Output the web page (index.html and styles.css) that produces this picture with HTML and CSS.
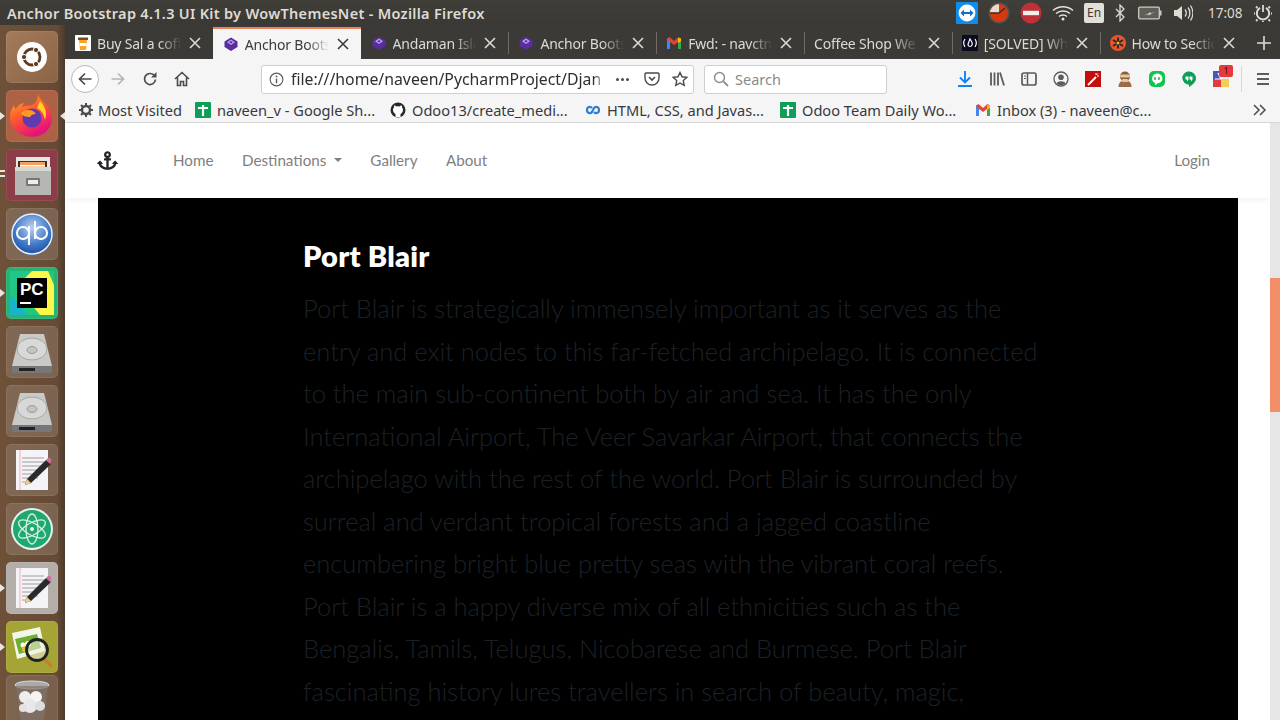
FILE: index.html
```html
<!DOCTYPE html>
<html lang="en">
<head>
<meta charset="utf-8">
<title>Anchor Bootstrap 4.1.3 UI Kit by WowThemesNet - Mozilla Firefox</title>
<link rel="stylesheet" href="styles.css">
</head>
<body>
<svg class="defs" viewBox="0 0 1 1"><defs>
  <g id="close"><path d="M1 1l10 10M11 1L1 11" fill="none" stroke="currentColor" stroke-width="1.600"/></g>
  <g id="hdd"><path d="M10 4h24l8 32H2z" fill="#c9c9c7"/><path d="M2 36h40v5a2 2 0 0 1-2 2H4a2 2 0 0 1-2-2z" fill="#77777a"/><rect x="9" y="38" width="16" height="3" fill="#222"/><ellipse cx="22" cy="19" rx="15" ry="11" fill="#d8d8d6" stroke="#a6a6a4"/><ellipse cx="22" cy="20" rx="5" ry="3.500" fill="#c4c4c2" stroke="#999"/></g>
  <g id="gedit"><rect x="6" y="2" width="32" height="40" fill="#f4f4f8"/><path d="M10 2v40" stroke="#f0b0b0"/><path d="M12 10h22M12 14h22M12 18h20M12 22h18M12 26h14M12 30h16M12 34h10" stroke="#888" stroke-width=".8"/><path d="M15 37l2-6 19-19 5 4-20 19z" fill="#2a2a2a"/><path d="M36 12l2-2c2-1 4 2 3 4l-1 2z" fill="#d46a9c"/><path d="M15 37l2-6 4 4z" fill="#f0d080"/></g>
  <g id="gem"><path d="M8 1.500l6.500 4v5.500L8 15l-6.500-4V5.500z" fill="#5a2ca0"/><path d="M8 3.500l4 2.700-4 2.700-4-2.700z" fill="#b9a3e6"/><path d="M8 5l1.800 1.200L8 7.400 6.200 6.200z" fill="#5a2ca0"/></g>
  <g id="gmail"><path d="M1 3.500V14h3V7l4 3 4-3v7h3V3.500L12.500 2 8 6 3.500 2z" fill="#ea4335"/><path d="M1 4v10h3V6.500z" fill="#4285f4"/><path d="M15 4v10h-3V6.500z" fill="#34a853"/><path d="M12 3l3 .5V6l-3 2z" fill="#fbbc04"/></g>
  <g id="gsheet"><rect width="16" height="16" rx="1" fill="#0f9d58"/><path d="M8 3v11M3 6h10" stroke="#fff" stroke-width="2.200"/></g>
</defs></svg>

<header class="panel">
  <div class="wintitle">Anchor Bootstrap 4.1.3 UI Kit by WowThemesNet - Mozilla Firefox</div>
  <div class="tray">
    <svg class="t-tv" viewBox="0 0 22 22"><rect width="22" height="22" rx="1" fill="#0e8ee9"/><circle cx="11" cy="11" r="8.400" fill="#fff"/><path d="M4.500 11l3.500-3.500V10h6V7.500l3.500 3.500-3.500 3.500V12H8v2.500z" fill="#0e6fd0"/></svg>
    <svg class="t-dial" viewBox="0 0 22 22"><circle cx="11" cy="11" r="10.500" fill="#55534f"/><circle cx="11" cy="11" r="9" fill="#d8380f"/><path d="M11 11V2a9 9 0 0 0-9 9z" fill="#ead9cc"/><path d="M11 11H2M11 11l6-5" stroke="#3a2a20" stroke-width="1.300"/></svg>
    <svg class="t-stop" viewBox="0 0 22 22"><circle cx="11" cy="11" r="10.500" fill="#c03038"/><rect x="3" y="8.800" width="16" height="4.400" fill="#f3f0ec"/></svg>
    <svg class="t-wifi" viewBox="0 0 22 16"><path d="M1 5.500c5.500-5 14.500-5 20 0M4 8.500c3.800-3.400 10.200-3.400 14 0M7 11.500c2.200-1.900 5.800-1.900 8 0" fill="none" stroke="#e6e3dd" stroke-width="1.500"/><circle cx="11" cy="14" r="1.500" fill="#e6e3dd"/></svg>
    <span class="t-lang">En</span>
    <svg class="t-bt" viewBox="0 0 10 18"><path d="M1 5l8 8-4 4V1l4 4-8 8" fill="none" stroke="#dfdbd2" stroke-width="1.300"/></svg>
    <svg class="t-bat" viewBox="0 0 24 14"><rect x=".7" y="1.200" width="20.600" height="11.600" rx="1" fill="#5f5e59" stroke="#cfcbc3" stroke-width="1.300"/><rect x="21.500" y="4.500" width="2" height="5" fill="#cfcbc3"/><path d="M6 9.500l7-3.500-1 1.800 5-2-7 4 1-1.800z" fill="#dfdbd2"/></svg>
    <svg class="t-vol" viewBox="0 0 20 18"><path d="M1 6h3l5-4v14l-5-4H1z" fill="#dfdbd2"/><path d="M12 5.500c1.500 2 1.500 5 0 7M15 3.500c2.500 3 2.500 8 0 11M17.500 1.500c3 4.500 3 10.500 0 15" fill="none" stroke="#dfdbd2" stroke-width="1.300"/></svg>
    <span class="t-clock">17:08</span>
    <svg class="t-pow" viewBox="0 0 18 18"><path d="M6 3.800a6.200 6.200 0 1 0 6 0" fill="none" stroke="#dfdbd2" stroke-width="2"/><path d="M9 1v7" stroke="#dfdbd2" stroke-width="1.800"/><path d="M3.500 2.500L2 4M14.500 2.500L16 4M1 9.500H0M18 9.500h-1M3.500 15.500L2 17M14.500 15.500L16 17M9 17v1" stroke="#dfdbd2" stroke-width="1.800"/></svg>
  </div>
</header>

<div class="desk">
  <nav class="launcher">
    <div class="tile tile-ubuntu"><svg viewBox="0 0 44 44"><circle cx="22" cy="22" r="15" fill="#fff"/><circle cx="22" cy="22" r="8" fill="none" stroke="#5b3a22" stroke-width="2.800"/><circle cx="14" cy="22" r="2.600" fill="#5b3a22" stroke="#fff"/><circle cx="26" cy="15" r="2.600" fill="#5b3a22" stroke="#fff"/><circle cx="26" cy="29" r="2.600" fill="#5b3a22" stroke="#fff"/></svg></div>
    <div class="tile tile-fox pip-both"><svg viewBox="0 0 44 44"><defs><linearGradient id="fx" x1="0" y1="0" x2=".5" y2="1"><stop offset="0" stop-color="#ffbc1f"/><stop offset=".5" stop-color="#ff5a2c"/><stop offset="1" stop-color="#e6127c"/></linearGradient></defs><path d="M28 0c1 5 7 8 11 14 5 9 3 18-3 24-6 5-16 6-23 3C5 38 0 31 0 23c0-5 2-9 4-12 0 2 1 3 2 4 1-3 5-6 9-6-2 1-3 3-3 4 4-2 8-1 10-2 4-2 6-6 6-11z" fill="url(#fx)"/><path d="M30 7c4 4 8 11 5 19-1-6-4-10-8-12z" fill="#ffd028"/><circle cx="22" cy="24" r="9.500" fill="#5f3ab0"/><path d="M11 19c5-4 12-4 15 1-3 0-5 1-6 3-4 0-8-1-9-4z" fill="#ff9a20"/></svg></div>
    <div class="tile tile-files pip-double"><svg viewBox="0 0 44 44"><rect x="6" y="4" width="34" height="12" fill="#e6e6e4"/><rect x="8" y="8" width="29" height="10" fill="#333"/><rect x="10" y="9" width="25" height="7" fill="#f3a05e"/><rect x="10" y="12" width="25" height="1.500" fill="#fff"/><path d="M5 14h36v28H5z" fill="#b6b6b2"/><rect x="5" y="14" width="36" height="4" fill="#d8d8d4"/><rect x="16" y="25" width="14" height="8" rx="1" fill="#777"/><rect x="18" y="27" width="10" height="4" fill="#eee"/></svg></div>
    <div class="tile"><svg viewBox="0 0 44 44"><defs><radialGradient id="qb" cx=".5" cy=".35" r=".7"><stop offset="0" stop-color="#bcd2ee"/><stop offset=".6" stop-color="#3d78c8"/><stop offset="1" stop-color="#1a3f8c"/></radialGradient></defs><circle cx="22" cy="22" r="21" fill="url(#qb)"/><circle cx="22" cy="22" r="20" fill="none" stroke="#e8f0fb" stroke-width="1.500"/><circle cx="13" cy="21" r="6" fill="none" stroke="#fff" stroke-width="2"/><path d="M19 14v19" stroke="#fff" stroke-width="2"/><circle cx="31" cy="21" r="6" fill="none" stroke="#fff" stroke-width="2"/><path d="M25 9v18" stroke="#fff" stroke-width="2"/></svg></div>
    <div class="tile tile-pc pip-left"><svg viewBox="0 0 44 44"><rect width="44" height="44" fill="#22c77f"/><path d="M14 0h24l6 14v30H30L10 20z" fill="#fcf84a"/><path d="M0 0h22L0 22z" fill="#21c789"/><path d="M0 44V24l18 20z" fill="#19b4c8"/><rect x="7" y="7" width="30" height="30" fill="#000"/><text x="10" y="24" class="pc-text">PC</text><rect x="10" y="31" width="11" height="2" fill="#fff"/></svg></div>
    <div class="tile"><svg viewBox="0 0 44 44"><use href="#hdd"/></svg></div>
    <div class="tile"><svg viewBox="0 0 44 44"><use href="#hdd"/></svg></div>
    <div class="tile"><svg viewBox="0 0 44 44"><use href="#gedit"/></svg></div>
    <div class="tile"><svg viewBox="0 0 44 44"><circle cx="22" cy="22" r="21" fill="#e6f4ec"/><circle cx="22" cy="22" r="19" fill="#1fa971"/><g fill="none" stroke="#d8f2e4" stroke-width="1.300"><ellipse cx="22" cy="22" rx="15" ry="6" transform="rotate(30 22 22)"/><ellipse cx="22" cy="22" rx="15" ry="6" transform="rotate(90 22 22)"/><ellipse cx="22" cy="22" rx="15" ry="6" transform="rotate(150 22 22)"/></g><circle cx="22" cy="22" r="2" fill="#e6f4ec"/></svg></div>
    <div class="tile tile-light pip-left"><svg viewBox="0 0 44 44"><use href="#gedit"/></svg></div>
    <div class="tile tile-olive pip-left"><svg viewBox="0 0 44 44"><path d="M2 8l28-6 5 24-28 8z" fill="#f2f6e8"/><path d="M5 14l22-5 4 14-22 6z" fill="#6fae35"/><circle cx="13" cy="20" r="2.500" fill="#fff"/><circle cx="18" cy="19" r="3" fill="#fff"/><circle cx="15" cy="24" r="3" fill="#e8c030"/><path d="M33 33l9 9" stroke="#c8802e" stroke-width="3.500"/><circle cx="27" cy="25" r="10.500" fill="#f0f0e4" fill-opacity=".55" stroke="#20241c" stroke-width="2.800"/></svg></div>
    <div class="tile tile-trash"><svg viewBox="0 0 44 44"><ellipse cx="22" cy="6" rx="17" ry="4" fill="#aaa" stroke="#ddd"/><path d="M6 7l4 33c4 3 20 3 24 0l4-33z" fill="#80746a" fill-opacity=".7"/><circle cx="15" cy="18" r="6" fill="#eee"/><circle cx="26" cy="18" r="6" fill="#f4f4f4"/><circle cx="20" cy="27" r="7" fill="#e8e8e8"/><circle cx="30" cy="27" r="5" fill="#ddd"/><circle cx="13" cy="29" r="4" fill="#e2e2e2"/></svg></div>
  </nav>

  <div class="browser">
    <div class="tabstrip">
      <div class="tab"><svg class="fav" viewBox="0 0 16 16"><rect width="16" height="16" rx="1" fill="#fff"/><path d="M4 5h8l-1 10H5z" fill="#f5a623"/><rect x="3" y="2.500" width="10" height="2.500" fill="#7a4a20"/><rect x="4.500" y="8" width="7" height="3" fill="#fff"/></svg><span class="tab-name">Buy Sal a coff</span><svg class="tab-x" viewBox="0 0 12 12"><use href="#close"/></svg></div>
      <div class="tab tab-active"><svg class="fav" viewBox="0 0 16 16"><use href="#gem"/></svg><span class="tab-name">Anchor Boots</span><svg class="tab-x" viewBox="0 0 12 12"><use href="#close"/></svg></div>
      <div class="tab"><svg class="fav" viewBox="0 0 16 16"><use href="#gem"/></svg><span class="tab-name">Andaman Isla</span><svg class="tab-x" viewBox="0 0 12 12"><use href="#close"/></svg></div>
      <div class="tab tab-sep"><svg class="fav" viewBox="0 0 16 16"><use href="#gem"/></svg><span class="tab-name">Anchor Boots</span><svg class="tab-x" viewBox="0 0 12 12"><use href="#close"/></svg></div>
      <div class="tab tab-sep"><svg class="fav" viewBox="0 0 16 16"><use href="#gmail"/></svg><span class="tab-name">Fwd: - navctn</span><svg class="tab-x" viewBox="0 0 12 12"><use href="#close"/></svg></div>
      <div class="tab tab-sep"><span class="tab-name">Coffee Shop We</span><svg class="tab-x" viewBox="0 0 12 12"><use href="#close"/></svg></div>
      <div class="tab tab-sep"><svg class="fav" viewBox="0 0 16 16"><rect width="16" height="16" fill="#0a0a23"/><path d="M3 4c-2 3-2 5 0 8M13 4c2 3 2 5 0 8M8 4c1 2 3 3 2 6-1 2-3 2-4 0 0-2 1-3 2-6z" fill="none" stroke="#fff" stroke-width="1.200"/></svg><span class="tab-name">[SOLVED] Wh</span><svg class="tab-x" viewBox="0 0 12 12"><use href="#close"/></svg></div>
      <div class="tab tab-sep"><svg class="fav" viewBox="0 0 16 16"><circle cx="8" cy="8" r="8" fill="#e8552a"/><path d="M8 2.500v11M3 5l10 6M13 5L3 11" stroke="#2c2c2c" stroke-width="2"/><circle cx="8" cy="8" r="1.500" fill="#f5b51c"/></svg><span class="tab-name">How to Sectio</span><svg class="tab-x" viewBox="0 0 12 12"><use href="#close"/></svg></div>
      <div class="tab-plus"><svg viewBox="0 0 14 14"><path d="M7 0v14M0 7h14" stroke="#dfdbd2" stroke-width="1.600"/></svg></div>
    </div>

    <div class="toolbar">
      <div class="backbtn"><svg viewBox="0 0 16 16"><path d="M14.500 8H2.500M8 2.500L2.500 8 8 13.500" fill="none" stroke="#4a4a4f" stroke-width="1.700"/></svg></div>
      <svg class="tb-ic tb-fwd" viewBox="0 0 16 16"><path d="M1.500 8h12M8 2.500L13.500 8 8 13.500" fill="none" stroke="#b4b4b4" stroke-width="1.700"/></svg>
      <svg class="tb-ic" viewBox="0 0 16 16"><path d="M13.500 8.500A5.500 5.500 0 1 1 12 4.200" fill="none" stroke="#4a4a4f" stroke-width="1.700"/><path d="M14.500 1v5.500H9z" fill="#4a4a4f"/></svg>
      <svg class="tb-ic" viewBox="0 0 16 16"><path d="M1 8l7-6.500L15 8M3.500 6.500V14.500h3v-4h3v4h3V6.500" fill="none" stroke="#4a4a4f" stroke-width="1.600"/></svg>
      <div class="urlbar">
        <svg class="url-info" viewBox="0 0 16 16"><circle cx="8" cy="8" r="6.800" fill="none" stroke="#5a5a5f" stroke-width="1.200"/><path d="M8 7v5" stroke="#5a5a5f" stroke-width="1.500"/><circle cx="8" cy="4.700" r="1" fill="#5a5a5f"/></svg>
        <span class="url-text">file:///home/naveen/PycharmProject/Djan</span>
        <span class="url-dots"><i></i><i></i><i></i></span>
        <svg class="url-ic" viewBox="0 0 16 16"><path d="M2 2h12a1.500 1.500 0 0 1 1 1v4a7 7 0 0 1-14 0V3a1.500 1.500 0 0 1 1-1z" fill="none" stroke="#4a4a4f" stroke-width="1.400"/><path d="M5 6l3 3 3-3" fill="none" stroke="#4a4a4f" stroke-width="1.600"/></svg>
        <svg class="url-ic" viewBox="0 0 16 16"><path d="M8 1.500l2 4.300 4.700.6-3.400 3.200.9 4.700L8 12l-4.200 2.300.9-4.700L1.300 6.400 6 5.800z" fill="none" stroke="#4a4a4f" stroke-width="1.400"/></svg>
      </div>
      <div class="searchbar">
        <svg viewBox="0 0 16 16"><circle cx="6.500" cy="6.500" r="5" fill="none" stroke="#8f8f8f" stroke-width="1.500"/><path d="M10.500 10.500l4.500 4.500" stroke="#8f8f8f" stroke-width="1.800"/></svg>
        <span>Search</span>
      </div>
      <div class="tb-right">
        <svg class="tr-ic" viewBox="0 0 16 16"><path d="M8 0v11M3 6.500L8 11.500 13 6.500" fill="none" stroke="#0a84ff" stroke-width="1.900"/><rect x="1" y="14" width="14" height="2" fill="#0a84ff"/></svg>
        <svg class="tr-ic" viewBox="0 0 16 16"><path d="M2 1.500v13M5.500 1.500v13M9 1.500v13M11 1.500l4 13" stroke="#5a5a5f" stroke-width="1.800"/></svg>
        <svg class="tr-ic" viewBox="0 0 16 16"><rect x="1" y="2" width="14" height="12" rx="2" fill="none" stroke="#5a5a5f" stroke-width="1.700"/><path d="M6.500 2v12" stroke="#5a5a5f" stroke-width="1.500"/><path d="M3 5h2M3 7.500h2" stroke="#5a5a5f"/></svg>
        <svg class="tr-ic" viewBox="0 0 16 16"><circle cx="8" cy="8" r="7" fill="none" stroke="#5a5a5f" stroke-width="1.300"/><circle cx="8" cy="6.300" r="2.800" fill="#5a5a5f"/><path d="M3.500 12.500c1-3 8-3 9 0-2 2-7 2-9 0z" fill="#5a5a5f"/></svg>
        <svg class="tr-ic" viewBox="0 0 16 16"><rect width="16" height="16" fill="#c40d0d"/><path d="M3 14L11 6" stroke="#fff" stroke-width="2"/><path d="M11 2v2M14 5h-2M13 2.500l-1.500 1.500" stroke="#fff"/></svg>
        <svg class="tr-ic" viewBox="0 0 16 16"><circle cx="8" cy="5.500" r="5" fill="#8b5e3c"/><rect x="3" y="3.500" width="10" height="3" rx="1.500" fill="#e8c8a0"/><path d="M1.500 16c0-4 2-6.500 6.500-6.500s6.500 2.500 6.500 6.500z" fill="#9c6c48"/><rect x="4.500" y="8" width="7" height="3" rx="1.500" fill="#e8c8a0"/></svg>
        <svg class="tr-ic" viewBox="0 0 16 16"><rect width="16" height="16" rx="5" fill="#10c44c"/><path d="M8 2.500a5.500 5 0 0 1 0 10c-.5 1-1.500 1.500-2 1.500l.3-2A5.500 5 0 0 1 8 2.500z" fill="#fff"/><path d="M6 6.200v2.500M10 6.200v2.500" stroke="#10a040" stroke-width="1.500"/></svg>
        <svg class="tr-ic" viewBox="0 0 16 16"><path d="M8 .5a7 7 0 0 1 7 7c0 3.500-3.500 6.500-7 8.500v-2.500a6 6 0 0 1 0-13z" fill="#0f9d58"/><path d="M8 .5a6.500 6.500 0 0 0 0 13z" fill="#0f9d58"/><path d="M4.500 5.500h3v3l-1.500 2v-2h-1.500zM8.500 5.500h3v3l-1.500 2v-2H8.500z" fill="#fff"/></svg>
        <span class="tr-multi"><svg viewBox="0 0 16 16"><rect width="8" height="8" fill="#4a55b8"/><rect x="8" width="8" height="8" fill="#e8e8e8"/><rect y="8" width="8" height="8" fill="#e23a3a"/><rect x="8" y="8" width="8" height="8" fill="#f2ce58"/><path d="M8 8L5 2M8 8l4-6M8 8H2" stroke="#fff" stroke-width="1.200"/></svg><b class="badge">1</b></span>
        <span class="tb-div"></span>
        <svg class="tb-menu" viewBox="0 0 14 14"><path d="M1 2h12M1 7h12M1 12h12" stroke="#5a5a5f" stroke-width="1.800"/></svg>
      </div>
    </div>

    <div class="bookmarks">
      <div class="bm bm-first"><svg viewBox="0 0 16 16"><circle cx="8" cy="8" r="4" fill="none" stroke="#4a4a4f" stroke-width="2.400"/><path d="M8 1v3M8 12v3M1 8h3M12 8h3M3 3l2 2M11 11l2 2M13 3l-2 2M5 11l-2 2" stroke="#4a4a4f" stroke-width="2"/></svg><span>Most Visited</span></div>
      <div class="bm"><svg viewBox="0 0 16 16"><use href="#gsheet"/></svg><span>naveen_v - Google Sh...</span></div>
      <div class="bm"><svg viewBox="0 0 16 16"><circle cx="8" cy="8" r="7.500" fill="#24292e"/><path d="M5.500 15v-3c-1-.5-2.500-2-2.500-4 0-1 .3-2 1-2.500C4 4.500 4 4 4.300 3.500c1 0 1.700.5 2.200 1a6 6 0 0 1 3 0c.5-.5 1.200-1 2.200-1 .3.5.3 1 .3 2 .7.500 1 1.500 1 2.500 0 2-1.500 3.500-2.500 4v3z" fill="#fff"/></svg><span>Odoo13/create_medi...</span></div>
      <div class="bm"><svg viewBox="0 0 16 16"><path d="M7 6C5.500 4 2 4.500 2 8s3.500 4 5 2l2-4c1.500-2 5-1.500 5 2s-3.500 4-5 2" fill="none" stroke="#2f7fd6" stroke-width="2.200"/></svg><span>HTML, CSS, and Javas...</span></div>
      <div class="bm"><svg viewBox="0 0 16 16"><use href="#gsheet"/></svg><span>Odoo Team Daily Wo...</span></div>
      <div class="bm"><svg viewBox="0 0 16 16"><use href="#gmail"/></svg><span>Inbox (3) - naveen@c...</span></div>
      <svg class="bm-more" viewBox="0 0 14 12"><path d="M1 1l5 5-5 5M7 1l5 5-5 5" fill="none" stroke="#4a4a4f" stroke-width="1.500"/></svg>
    </div>

    <div class="viewport">
      <main class="page">
        <div class="sitenav">
          <svg class="brand" viewBox="0 0 576 512"><path fill="#212529" d="M12.971 352h32.394C67.172 454.735 181.944 512 288 512c106.229 0 220.853-57.38 242.635-160h32.394c10.691 0 16.045-12.926 8.485-20.485l-67.029-67.029c-4.686-4.686-12.284-4.686-16.971 0l-67.029 67.029c-7.56 7.56-2.206 20.485 8.485 20.485h35.146c-20.29 54.317-84.963 86.588-144.117 94.015V256h52c6.627 0 12-5.373 12-12v-40c0-6.627-5.373-12-12-12h-52v-5.47c37.281-13.178 63.995-48.725 64-90.518C384.005 43.772 341.605.738 289.37.01 235.723-.739 192 42.525 192 96c0 41.798 26.716 77.35 64 90.53V192h-52c-6.627 0-12 5.373-12 12v40c0 6.627 5.373 12 12 12h52v190.015c-58.936-7.399-123.82-39.679-144.117-94.015h35.146c10.691 0 16.045-12.926 8.485-20.485l-67.029-67.029c-4.686-4.686-12.284-4.686-16.971 0L4.485 331.515C-3.074 339.074 2.28 352 12.971 352zM288 64c17.645 0 32 14.355 32 32s-14.355 32-32 32-32-14.355-32-32 14.355-32 32-32z"/></svg>
          <a class="navlink">Home</a>
          <a class="navlink">Destinations<i class="caret"></i></a>
          <a class="navlink">Gallery</a>
          <a class="navlink">About</a>
          <a class="navlink login">Login</a>
        </div>
        <section class="hero">
          <div class="article">
            <h2>Port Blair</h2>
            <p>Port Blair is strategically immensely important as it serves as the<br>
            entry and exit nodes to this far-fetched archipelago. It is connected<br>
            to the main sub-continent both by air and sea. It has the only<br>
            International Airport, The Veer Savarkar Airport, that connects the<br>
            archipelago with the rest of the world. Port Blair is surrounded by<br>
            surreal and verdant tropical forests and a jagged coastline<br>
            encumbering bright blue pretty seas with the vibrant coral reefs.<br>
            Port Blair is a happy diverse mix of all ethnicities such as the<br>
            Bengalis, Tamils, Telugus, Nicobarese and Burmese. Port Blair<br>
            fascinating history lures travellers in search of beauty, magic,</p>
          </div>
        </section>
      </main>
      <div class="scrollbar"><div class="thumb"></div></div>
    </div>
  </div>
</div>
</body>
</html>
```
FILE: styles.css
```css
* { box-sizing: border-box; }
html, body { margin: 0; height: 720px; overflow: hidden; }
body { display: flex; flex-direction: column; font-family: "Noto Sans", "Open Sans", sans-serif; background: #fff; }
.defs { display: none; }

.panel { height: 25px; flex: none; display: flex; align-items: center; justify-content: space-between; background: linear-gradient(#3f3e39, #3a3935); color: #dfdbd2; }
.wintitle { margin-left: 7px; font-size: 14.500px; letter-spacing: .3px; font-weight: 600; white-space: nowrap; }
.tray { display: flex; align-items: center; width: 324px; flex: none; height: 25px; }
.tray svg, .tray span { flex: none; }
.t-tv { width: 22px; height: 22px; }
.t-dial { width: 22px; height: 22px; margin-left: 10px; }
.t-stop { width: 22px; height: 22px; margin-left: 10px; }
.t-wifi { width: 22px; height: 16px; margin-left: 10px; }
.t-lang { width: 20px; height: 20px; margin-left: 10px; background: #e2dfd8; color: #3c3b37; font-size: 12px; line-height: 20px; text-align: center; border-radius: 2px; }
.t-bt { width: 10px; height: 18px; margin-left: 11px; }
.t-bat { width: 24px; height: 14px; margin-left: 13px; }
.t-vol { width: 20px; height: 18px; margin-left: 11px; }
.t-clock { margin-left: 15px; font-size: 13.500px; width: 36px; }
.t-pow { width: 18px; height: 18px; margin-left: 10px; }

.desk { flex: 1; min-height: 0; display: flex; }

.launcher { width: 65px; flex: none; display: flex; flex-direction: column; gap: 7px; padding: 6px 0 0 6px; background: linear-gradient(90deg, #6e5138, #664a35 88%, #4e3a2b); overflow: hidden; }
.tile { width: 52px; height: 52px; flex: none; position: relative; display: flex; align-items: center; justify-content: center; border-radius: 5px; background: rgba(255,255,255,.14); box-shadow: inset 0 0 0 1px rgba(255,255,255,.08); }
.tile svg { width: 44px; height: 44px; }
.tile-ubuntu { background: linear-gradient(135deg, #a47b5c, #8a6446); }
.tile-fox { background: #ad6145; }
.tile-files { background: #8d3d47; }
.tile-pc { background: #27b374; }
.tile-light { background: #b3aeaa; }
.tile-olive { background: #a5a535; }
.tile-trash { background: rgba(255,255,255,.12); margin-top: -5px; }
.pc-text { fill: #fff; font-family: "Liberation Sans", sans-serif; font-size: 17px; font-weight: 700; }
.pip-left::before, .pip-both::before { content: ""; position: absolute; left: -6px; top: 22px; border: 4px solid transparent; border-left: 5px solid #e8e4de; }
.pip-both::after { content: ""; position: absolute; right: -7px; top: 22px; border: 4px solid transparent; border-right: 5px solid #e8e4de; }
.pip-double::before { content: ""; position: absolute; left: -6px; top: 21px; width: 5px; height: 2px; background: #e8e4de; box-shadow: 0 5px 0 #e8e4de; }

.browser { flex: 1; min-width: 0; display: flex; flex-direction: column; }

.tabstrip { height: 34px; flex: none; display: flex; align-items: flex-end; background: #3b3a36; padding-top: 2px; }
.tab { flex: 0 0 147.800px; min-width: 0; height: 32px; display: flex; align-items: center; gap: 6px; padding: 0 12px 0 10px; color: #dcdad4; font-size: 14px; letter-spacing: -.2px; position: relative; white-space: nowrap; }
.tab-sep::before { content: ""; position: absolute; left: 0; top: 5px; bottom: 5px; width: 1px; background: #6c6b66; }
.tab-active { background: #f5f5f5; color: #3a3a3f; border-top: 2px solid #f0825a; }
.fav { width: 16px; height: 16px; flex: none; }
.tab-name { flex: 1; min-width: 0; overflow: hidden; -webkit-mask-image: linear-gradient(90deg, #000 72%, transparent 98%); mask-image: linear-gradient(90deg, #000 72%, transparent 98%); }
.tab-x { flex: none; width: 12px; height: 12px; }
.tab-plus { flex: 1; min-width: 0; display: flex; align-items: center; justify-content: center; height: 32px; }
.tab-plus svg { width: 14px; height: 14px; }

.toolbar { height: 38px; flex: none; display: flex; align-items: center; background: #f5f5f5; padding: 2px 0 0 6px; }
.backbtn { width: 28px; height: 28px; flex: none; border: 1px solid #b8b8b8; border-radius: 50%; background: #fff; display: flex; align-items: center; justify-content: center; }
.backbtn svg { width: 16px; height: 16px; }
.tb-ic { width: 16px; height: 16px; flex: none; margin-left: 16px; }
.tb-fwd { margin-left: 11px; }
.urlbar { width: 433px; height: 29px; flex: none; margin-left: 71px; background: #fff; border: 1px solid #cfcfcf; border-radius: 3px; display: flex; align-items: center; padding-left: 7px; }
.url-info { width: 15px; height: 15px; flex: none; }
.url-text { width: 315px; flex: none; margin-left: 7px; font-size: 15.800px; color: #2f2f33; white-space: nowrap; overflow: hidden; -webkit-mask-image: linear-gradient(90deg, #000 96%, transparent); mask-image: linear-gradient(90deg, #000 96%, transparent); }
.url-dots { display: flex; gap: 2px; margin: 0 3px 0 10px; flex: none; }
.url-dots i { width: 3px; height: 3px; border-radius: 50%; background: #4a4a4f; }
.url-ic { width: 16px; height: 16px; flex: none; margin-left: 12px; }
.searchbar { width: 183px; height: 29px; flex: none; margin-left: 10px; background: #fff; border: 1px solid #cfcfcf; border-radius: 3px; display: flex; align-items: center; gap: 6px; padding-left: 8px; color: #8a8a8a; font-size: 14.500px; }
.searchbar svg { width: 16px; height: 16px; }
.tb-right { flex: 1; display: flex; align-items: center; padding-left: 70px; height: 34px; }
.tr-ic { width: 16px; height: 16px; flex: none; margin-right: 16px; }
.tr-multi { position: relative; width: 16px; height: 16px; flex: none; }
.tr-multi svg { width: 16px; height: 16px; display: block; }
.badge { position: absolute; top: -6px; left: 6px; width: 14px; height: 12px; background: #e8383c; color: #1c1c1c; font-size: 9px; font-weight: 400; line-height: 12px; text-align: center; border-radius: 2px; }
.tb-div { width: 1px; height: 26px; background: #d8d8d8; margin-left: 12px; flex: none; }
.tb-menu { width: 14px; height: 14px; margin-left: 14px; flex: none; }

.bookmarks { height: 26px; flex: none; display: flex; align-items: center; background: #f5f5f5; border-bottom: 1px solid #d6d6d6; padding-left: 13px; position: relative; }
.bm { flex: 0 0 195px; min-width: 0; display: flex; align-items: center; gap: 6px; font-size: 14.600px; color: #38383d; white-space: nowrap; }
.bm svg { width: 16px; height: 16px; flex: none; }
.bm-first { flex-basis: 117px; gap: 4px; }
.bm-more { width: 14px; height: 12px; position: absolute; right: 13px; top: 7px; }

.viewport { flex: 1; min-height: 0; display: flex; }
.page { flex: 1; min-width: 0; background: #fff; overflow: hidden; }
.scrollbar { width: 10px; flex: none; background: #e6e6e6; padding-top: 155px; }
.thumb { height: 134px; background: #f28f68; }

.sitenav { height: 75px; display: flex; align-items: center; padding: 0 60px 2px 32px; font-family: Lato, "Open Sans", sans-serif; background: #fff; box-shadow: 0 2px 6px rgba(0,0,0,.05); position: relative; z-index: 1; }
.brand { width: 21px; height: 19px; flex: none; margin: 2px 55px 0 0; }
.navlink { color: #808080; font-size: 15.200px; margin-right: 28.500px; white-space: nowrap; display: flex; align-items: center; }
.caret { display: inline-block; margin-left: 7.500px; border: 4px solid transparent; border-top-color: #808080; border-bottom: 0; }
.login { margin-left: auto; margin-right: 0; }

.hero { margin: 0 32px 0 33px; height: 700px; background: #000; padding: 38px 0 0 205px; }
.article h2 { margin: 0 0 11px; color: #fff; font-family: Lato, sans-serif; font-size: 29px; letter-spacing: .25px; font-weight: 800; line-height: 40px; }
.article p { margin: 0; color: #1c2127; font-family: Lato, sans-serif; font-weight: 300; font-size: 25.500px; line-height: 42.500px; white-space: nowrap; }
```
